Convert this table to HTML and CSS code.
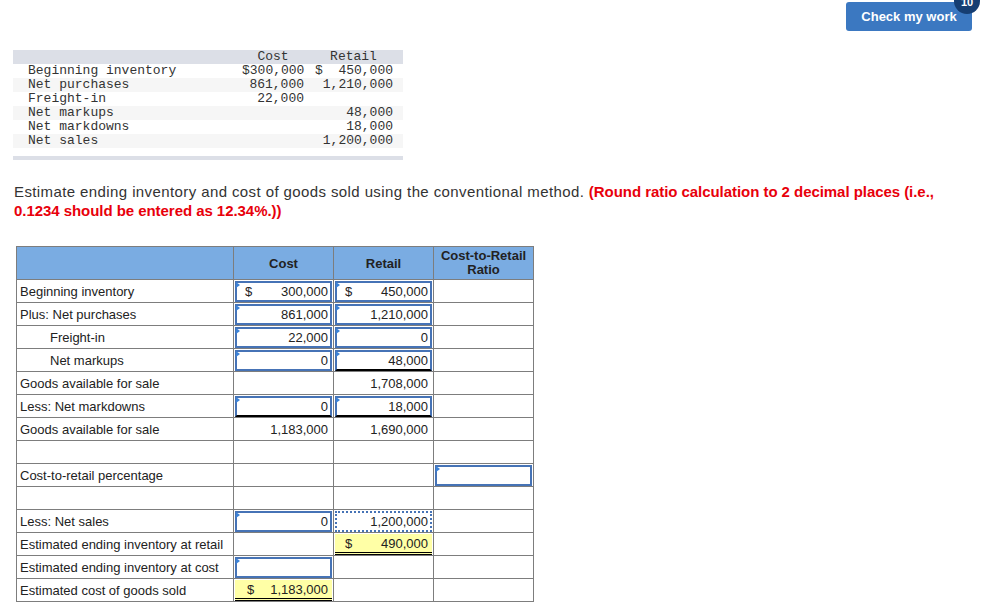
FILE: index.html
```html
<!DOCTYPE html>
<html>
<head>
<meta charset="utf-8">
<link rel="stylesheet" href="styles.css">
</head>
<body>
<div class="topbar">
  <button class="check">Check my work<span class="badge">10</span></button>
</div>

<table class="given">
  <colgroup><col class="g1"><col class="g2"><col class="g3"><col class="g4"><col class="g5"></colgroup>
  <tr class="ghead"><td></td><td class="ctr">Cost</td><td></td><td class="ctr">Retail</td><td></td></tr>
  <tr><td class="gl">Beginning inventory</td><td class="num">$300,000</td><td></td><td class="num">$  450,000</td><td></td></tr>
  <tr class="alt"><td class="gl">Net purchases</td><td class="num">861,000</td><td></td><td class="num">1,210,000</td><td></td></tr>
  <tr><td class="gl">Freight-in</td><td class="num">22,000</td><td></td><td class="num"></td><td></td></tr>
  <tr class="alt"><td class="gl">Net markups</td><td class="num"></td><td></td><td class="num">48,000</td><td></td></tr>
  <tr><td class="gl">Net markdowns</td><td class="num"></td><td></td><td class="num">18,000</td><td></td></tr>
  <tr class="alt"><td class="gl">Net sales</td><td class="num"></td><td></td><td class="num">1,200,000</td><td></td></tr>
  <tr class="gspace"><td colspan="5"></td></tr>
  <tr class="gfoot"><td colspan="5"></td></tr>
</table>

<p class="instr">Estimate ending inventory and cost of goods sold using the conventional method. <b class="red">(Round ratio calculation to 2 decimal places (i.e., 0.1234 should be entered as 12.34%.))</b></p>

<table class="ws">
  <colgroup><col class="w1"><col class="w2"><col class="w2"><col class="w2"></colgroup>
  <thead>
    <tr><th></th><th>Cost</th><th>Retail</th><th class="small">Cost-to-Retail<br>Ratio</th></tr>
  </thead>
  <tbody>
    <tr>
      <td class="lbl">Beginning inventory</td>
      <td class="cell"><div class="box inp"><span class="cur">$</span>300,000</div></td>
      <td class="cell"><div class="box inp"><span class="cur">$</span>450,000</div></td>
      <td></td>
    </tr>
    <tr>
      <td class="lbl">Plus: Net purchases</td>
      <td class="cell"><div class="box inp">861,000</div></td>
      <td class="cell"><div class="box inp">1,210,000</div></td>
      <td></td>
    </tr>
    <tr>
      <td class="lbl ind">Freight-in</td>
      <td class="cell"><div class="box inp">22,000</div></td>
      <td class="cell"><div class="box inp">0</div></td>
      <td></td>
    </tr>
    <tr>
      <td class="lbl ind">Net markups</td>
      <td class="cell"><div class="box inp">0</div></td>
      <td class="cell"><div class="box inp ul">48,000</div></td>
      <td></td>
    </tr>
    <tr>
      <td class="lbl">Goods available for sale</td>
      <td class="cell"></td>
      <td class="cell"><div class="box">1,708,000</div></td>
      <td></td>
    </tr>
    <tr>
      <td class="lbl">Less: Net markdowns</td>
      <td class="cell"><div class="box inp ul">0</div></td>
      <td class="cell"><div class="box inp ul">18,000</div></td>
      <td></td>
    </tr>
    <tr>
      <td class="lbl">Goods available for sale</td>
      <td class="cell"><div class="box">1,183,000</div></td>
      <td class="cell"><div class="box">1,690,000</div></td>
      <td></td>
    </tr>
    <tr><td class="lbl"></td><td></td><td></td><td></td></tr>
    <tr>
      <td class="lbl">Cost-to-retail percentage</td>
      <td></td>
      <td></td>
      <td class="cell"><div class="box inp"></div></td>
    </tr>
    <tr><td class="lbl"></td><td></td><td></td><td></td></tr>
    <tr>
      <td class="lbl">Less: Net sales</td>
      <td class="cell"><div class="box inp">0</div></td>
      <td class="cell"><div class="box dot">1,200,000</div></td>
      <td></td>
    </tr>
    <tr>
      <td class="lbl">Estimated ending inventory at retail</td>
      <td></td>
      <td class="cell"><div class="box total rt"><span class="cur">$</span>490,000</div></td>
      <td></td>
    </tr>
    <tr>
      <td class="lbl">Estimated ending inventory at cost</td>
      <td class="cell"><div class="box inp"></div></td>
      <td></td>
      <td></td>
    </tr>
    <tr>
      <td class="lbl">Estimated cost of goods sold</td>
      <td class="cell"><div class="box total"><span class="cur">$</span>1,183,000</div></td>
      <td></td>
      <td></td>
    </tr>
  </tbody>
</table>
</body>
</html>
```

FILE: styles.css
```css
html, body {
  margin: 0;
  padding: 0;
  background: #fff;
}

body {
  font-family: "Liberation Sans", Arial, sans-serif;
  color: #222;
  overflow: hidden;
}

.topbar {
  display: flex;
  justify-content: flex-end;
  padding: 2px 30px 0 0;
}

.check {
  position: relative;
  width: 126px;
  height: 29px;
  border: 0;
  border-radius: 3px;
  background: #3b78c1;
  color: #fff;
  font-family: "Liberation Sans", Arial, sans-serif;
  font-weight: bold;
  font-size: 13px;
  padding: 0;
  cursor: pointer;
}

.badge {
  position: absolute;
  top: -14px;
  right: -8px;
  width: 26px;
  height: 26px;
  border-radius: 50%;
  background: #163e72;
  color: #fff;
  font-size: 11px;
  font-weight: bold;
  line-height: 29px;
  text-align: center;
}

/* given data */
.given {
  margin: 19px 0 0 13px;
  width: 390px;
  table-layout: fixed;
  border-collapse: collapse;
  font-family: "Liberation Mono", "Courier New", monospace;
  font-size: 13px;
  color: #333;
}

.given col.g1 { width: 229px; }
.given col.g2 { width: 62px; }
.given col.g3 { width: 10px; }
.given col.g4 { width: 79px; }
.given col.g5 { width: 10px; }

.given td {
  padding: 0;
  height: 14px;
  line-height: 14px;
  white-space: pre;
}

.given .ghead td { background: #dcdfe7; }
.given .alt td { background: #f6f6f6; }
.given .gl { padding-left: 15px; }
.given .num { text-align: right; }
.given .ctr { text-align: center; }
.given .gspace td { height: 8px; }
.given .gfoot td { height: 4px; background: #dcdfe7; }

/* instructions */
.instr {
  margin: 22px 0 0 14px;
  width: 940px;
  font-size: 15px;
  line-height: 19px;
  letter-spacing: 0.4px;
  color: #333;
}

.red {
  color: #e8000b;
  letter-spacing: -0.05px;
}

/* worksheet */
.ws {
  margin: 26px 0 0 16px;
  width: 517px;
  table-layout: fixed;
  border-collapse: collapse;
  font-size: 13px;
  color: #222;
}

.ws col.w1 { width: 217px; }
.ws col.w2 { width: 100px; }

.ws th, .ws td {
  border: 1px solid #7d7d7d;
  padding: 0;
}

.ws th {
  height: 32px;
  background: #7aace2;
  font-size: 13px;
  font-weight: bold;
  color: #222;
}

.ws th.small {
  font-size: 13px;
  line-height: 14px;
}

.ws td { height: 22px; }

.ws .lbl {
  padding-left: 3px;
  white-space: nowrap;
}

.ws .lbl.ind { padding-left: 33px; }

.box {
  position: relative;
  box-sizing: border-box;
  height: 21px;
  margin: 0 1px;
  display: flex;
  align-items: center;
  justify-content: flex-end;
  padding: 0 4px 0 12px;
}

.box.inp {
  border: 2px solid #4673b6;
  padding: 0 2px 0 8px;
}

.box.inp.ul { border-bottom-color: #000; }

.box.inp::before {
  content: "";
  position: absolute;
  left: -1px;
  top: -1px;
  border-left: 4px solid #3c82d6;
  border-top: 3px solid transparent;
  border-bottom: 3px solid transparent;
}

.box.dot {
  border: 2px dotted #4673b6;
  padding: 0 2px 0 8px;
}

.box.total {
  background: #ffffa6;
  border-bottom: 3px double #000;
  padding-top: 1px;
}

.box.total.rt { padding-left: 10px; }

.cur { margin-right: auto; }
```
